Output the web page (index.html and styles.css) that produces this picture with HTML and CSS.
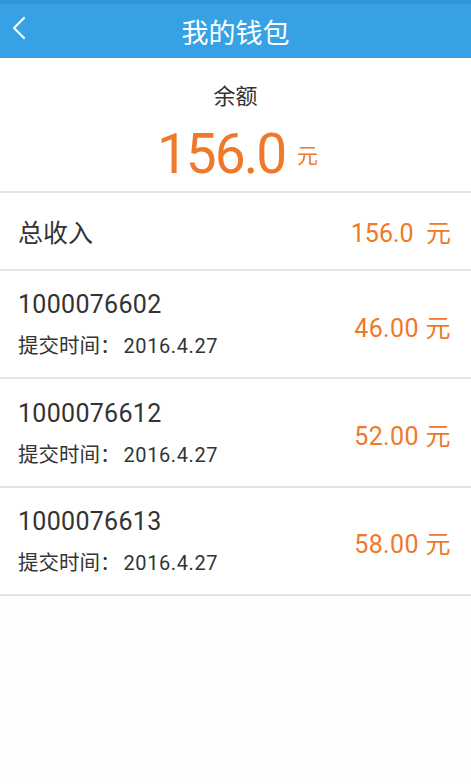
FILE: index.html
```html
<!DOCTYPE html>
<html lang="zh">
<head>
<meta charset="utf-8">
<title>我的钱包</title>
<link rel="stylesheet" href="styles.css">
</head>
<body>
<header class="topbar">
  <span class="back">
    <svg width="14" height="24" viewBox="0 0 14 24"><path d="M12 2 L2 12 L12 22" fill="none" stroke="#fff" stroke-width="2.2" stroke-linecap="round" stroke-linejoin="round"/></svg>
  </span>
  <h1 class="title">我的钱包</h1>
</header>
<section class="balance">
  <div class="balance-label">余额</div>
  <div class="balance-amount"><span class="big">156.0</span><span class="unit">元</span></div>
</section>
<div class="total">
  <span class="total-label">总收入</span>
  <span class="money">156.0&nbsp; 元</span>
</div>
<ul class="list">
  <li class="item">
    <div class="info"><div class="no">1000076602</div><div class="date">提交时间<span class="colon">：</span><span class="d">2016.4.27</span></div></div>
    <span class="money">46.00 元</span>
  </li>
  <li class="item">
    <div class="info"><div class="no">1000076612</div><div class="date">提交时间<span class="colon">：</span><span class="d">2016.4.27</span></div></div>
    <span class="money">52.00 元</span>
  </li>
  <li class="item">
    <div class="info"><div class="no">1000076613</div><div class="date">提交时间<span class="colon">：</span><span class="d">2016.4.27</span></div></div>
    <span class="money">58.00 元</span>
  </li>
</ul>
</body>
</html>
```
FILE: styles.css
```css
* { box-sizing: border-box; }
html, body { margin: 0; padding: 0; background: #fdfefe; }
body { font-family: Roboto, "Noto Sans CJK SC", sans-serif; color: #333; }
.topbar {
  height: 58px;
  background: #36a2e5;
  border-top: 4px solid #2f95d8;
  display: flex;
  align-items: center;
  justify-content: center;
  position: relative;
}
.back { position: absolute; left: 12px; top: 12px; }
.title { margin: 0; font-size: 27px; font-weight: normal; color: #fff; }
.balance {
  height: 135px;
  background: #fff;
  border-bottom: 2px solid #e4e4e4;
  display: flex;
  flex-direction: column;
  align-items: center;
  padding-top: 24px;
}
.balance-label { font-size: 22px; line-height: 30px; color: #333; }
.balance-amount { display: flex; align-items: baseline; margin-top: 10px; color: #f0782a; padding-left: 4px; }
.big { font-size: 55px; line-height: 64px; letter-spacing: -2px; }
.unit { font-size: 21px; margin-left: 12px; position: relative; top: -10px; }
.total {
  height: 78px;
  display: flex;
  align-items: center;
  justify-content: space-between;
  padding: 0 20px 0 18px;
  border-bottom: 2px solid #e4e4e4;
  background: #fff;
}
.total-label { font-size: 25px; color: #333; }
.money { font-size: 25px; color: #f0782a; }
.item .money { letter-spacing: 0.4px; }
.list { list-style: none; margin: 0; padding: 0; }
.item {
  height: 108.4px;
  display: flex;
  align-items: center;
  justify-content: space-between;
  padding: 3px 20px 0 18px;
  border-bottom: 2px solid #e4e4e4;
  background: #fff;
}
.no { font-size: 25px; line-height: 28px; letter-spacing: 0.3px; color: #333; }
.date { font-size: 20.5px; line-height: 28px; margin-top: 11px; color: #333; }
.colon { font-family: "Noto Sans CJK TC", "Noto Sans CJK SC", sans-serif; }
.d { font-size: 20px; letter-spacing: 0.6px; margin-left: 3px; }
```
